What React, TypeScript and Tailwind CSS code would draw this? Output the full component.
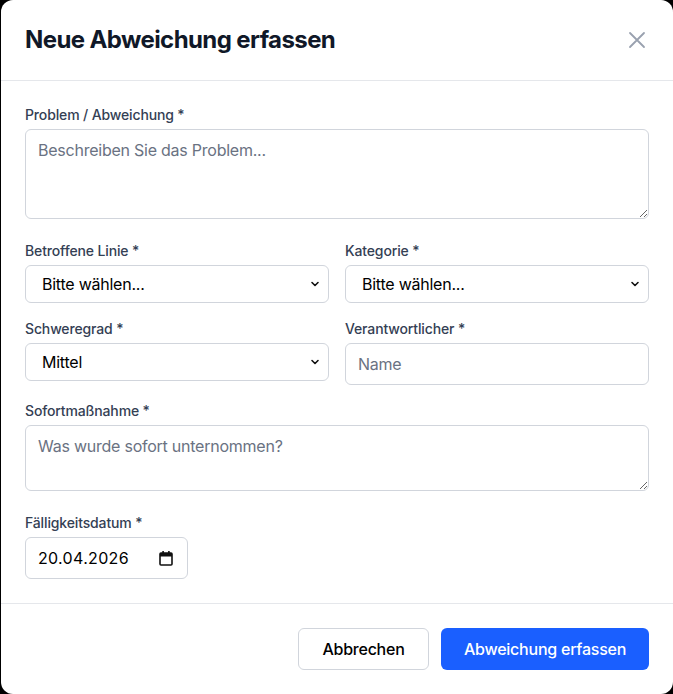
import React from 'react';

const font = { fontFamily: 'Inter, "Liberation Sans", sans-serif' };

const Label: React.FC<{ children: React.ReactNode }> = ({ children }) => (
  <label className="block mb-1 text-sm leading-5 font-medium tracking-[-0.01em] text-[#344054]">{children}</label>
);

const Chevron = () => (
  <svg
    className="pointer-events-none absolute right-[9px] top-1/2 -translate-y-1/2"
    width="10"
    height="10"
    viewBox="0 0 10 10"
    fill="none"
  >
    <path d="M2 3.5 5 6.5 8 3.5" stroke="#111" strokeWidth="1.6" strokeLinecap="round" strokeLinejoin="round" />
  </svg>
);

const Select: React.FC<{ value: string }> = ({ value }) => (
  <div className="relative">
    <select
      defaultValue={value}
      className="w-full h-[38px] appearance-none rounded-md border border-gray-300 bg-white pl-4 pr-8 text-base tracking-[-0.015em] text-black outline-none"
    >
      <option>{value}</option>
    </select>
    <Chevron />
  </div>
);

const CalendarIcon = () => (
  <svg width="14" height="16" viewBox="0 0 14 16" fill="none">
    <rect x="1" y="3" width="12" height="12" rx="1" stroke="#111" strokeWidth="1.6" fill="none" />
    <rect x="1" y="3" width="12" height="3.5" fill="#111" />
    <rect x="3.3" y="1" width="1.6" height="3" fill="#111" />
    <rect x="9.1" y="1" width="1.6" height="3" fill="#111" />
  </svg>
);

const fieldClass =
  'block w-full rounded-md border border-gray-300 px-3 py-2 text-base leading-6 tracking-[-0.015em] text-black placeholder:text-gray-500 outline-none';

export default function App() {
  return (
    <div className="min-h-screen bg-black pl-px" style={font}>
      <div className="flex w-[672px] flex-col rounded-xl bg-white">
        <div className="flex items-center justify-between border-b border-gray-200 px-6 py-6">
          <h2 className="text-2xl leading-8 font-bold tracking-tight text-gray-900">Neue Abweichung erfassen</h2>
          <button type="button" className="text-gray-400">
            <svg width="24" height="24" viewBox="0 0 24 24" fill="none">
              <path d="M5 5 19 19M19 5 5 19" stroke="currentColor" strokeWidth="1.8" strokeLinecap="round" />
            </svg>
          </button>
        </div>

        <div className="flex flex-col gap-4 p-6">
          <div className="pb-1.5">
            <Label>Problem / Abweichung *</Label>
            <textarea rows={3} placeholder="Beschreiben Sie das Problem..." className={fieldClass} />
          </div>

          <div className="grid grid-cols-2 gap-x-4 gap-y-4">
            <div>
              <Label>Betroffene Linie *</Label>
              <Select value="Bitte wählen..." />
            </div>
            <div>
              <Label>Kategorie *</Label>
              <Select value="Bitte wählen..." />
            </div>
            <div>
              <Label>Schweregrad *</Label>
              <Select value="Mittel" />
            </div>
            <div>
              <Label>Verantwortlicher *</Label>
              <input placeholder="Name" className={fieldClass} />
            </div>
          </div>

          <div className="pb-1.5">
            <Label>Sofortmaßnahme *</Label>
            <textarea rows={2} placeholder="Was wurde sofort unternommen?" className={fieldClass} />
          </div>

          <div>
            <Label>Fälligkeitsdatum *</Label>
            <div className="flex h-[42px] w-[163px] items-center justify-between rounded-md border border-gray-300 pl-3 pr-[14px]">
              <input
                readOnly
                value="20.04.2026"
                className="w-[110px] text-base leading-6 tracking-[0.02em] text-black outline-none"
              />
              <CalendarIcon />
            </div>
          </div>
        </div>

        <div className="flex justify-end gap-3 border-t border-gray-200 px-6 py-6">
          <button
            type="button"
            className="h-[42px] w-[131px] rounded-md border border-gray-300 bg-white text-base font-medium tracking-[-0.015em] text-black"
          >
            Abbrechen
          </button>
          <button
            type="button"
            className="h-[42px] w-[208px] rounded-md bg-[#1a5fff] text-base font-medium tracking-[-0.015em] text-white"
          >
            Abweichung erfassen
          </button>
        </div>
      </div>
    </div>
  );
}
